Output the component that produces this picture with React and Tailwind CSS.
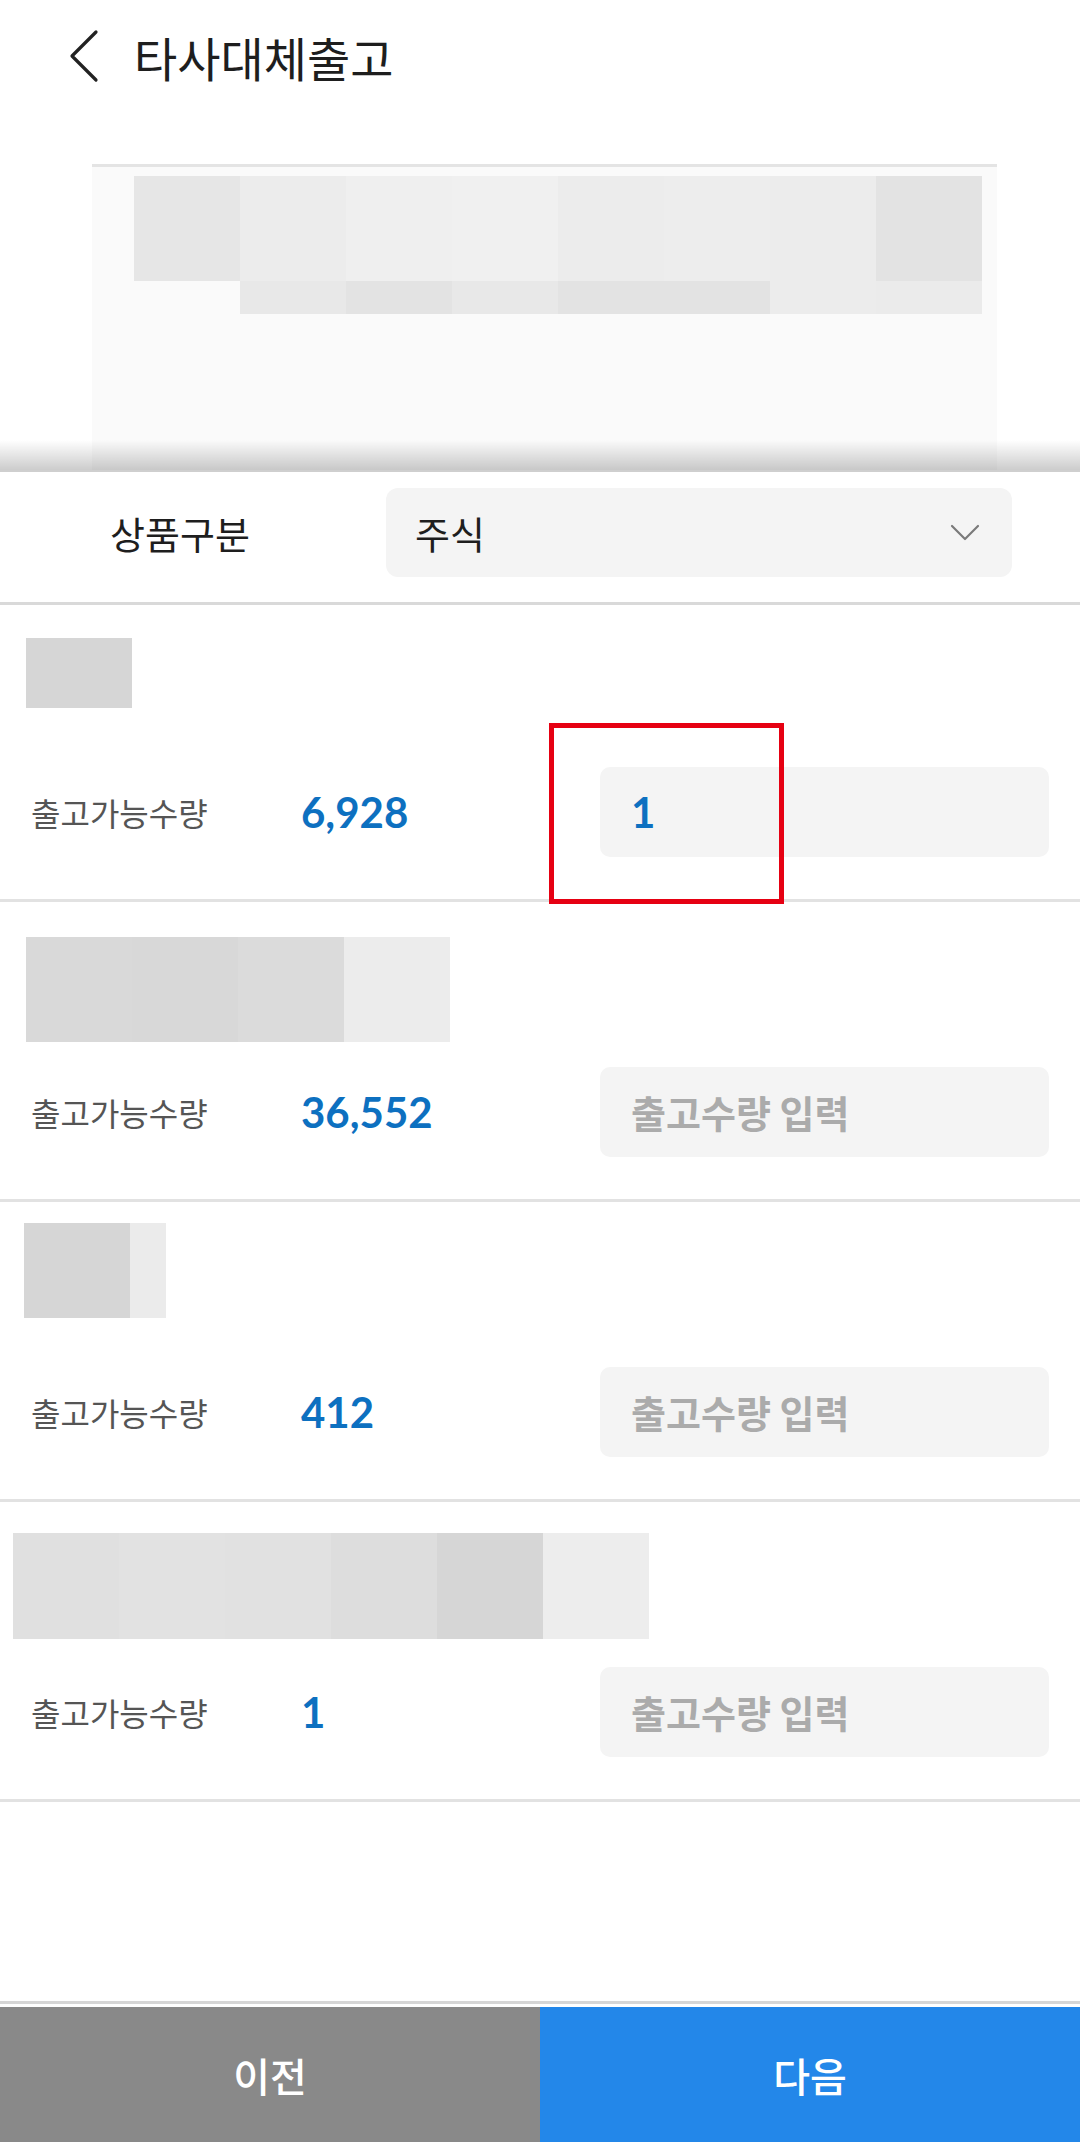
import React, { useState } from "react";

const kr = "font-['Noto_Sans_CJK_KR','Noto_Sans',sans-serif]";
const num = "font-['Lato','Noto_Sans_CJK_KR',sans-serif]";

// blurred name blocks (pixelated in the capture)
const previewTop = ["#e6e6e6", "#ececec", "#efefef", "#f0f0f0", "#ececec", "#ededed", "#ececec", "#e3e3e3"];
const previewBottom = ["#e8e8e8", "#e3e3e3", "#e8e8e8", "#e3e3e3", "#e3e3e3", "#ececec", "#ebebeb"];

const items = [
  { id: 1, avail: "6,928", value: "1", box: "h-[297px]", top: "h-[162px] pt-[33px]", ml: "ml-[26px]", h: "h-[70px]", tiles: ["#d6d6d6"] },
  { id: 2, avail: "36,552", value: "", box: "h-[300px]", top: "h-[165px] pt-[35px]", ml: "ml-[26px]", h: "h-[105px]", tiles: ["#d9d9d9", "#d8d8d8", "#dbdbdb", "#ececec"] },
  { id: 3, avail: "412", value: "", box: "h-[300px]", top: "h-[165px] pt-[21px]", ml: "ml-[24px]", h: "h-[95px]", tiles: ["#d6d6d6", "#ebebeb"], last: "w-[36px]" },
  { id: 4, avail: "1", value: "", box: "h-[300px]", top: "h-[165px] pt-[31px]", ml: "ml-[13px]", h: "h-[106px]", tiles: ["#e0e0e0", "#e2e2e2", "#e1e1e1", "#dddddd", "#d6d6d6", "#ededed"] },
];

const BackIcon = () => (
  <svg width="32" height="54" viewBox="0 0 32 54" fill="none">
    <path d="M28 3L4 27L28 51" stroke="#222" strokeWidth="3.2" strokeLinecap="round" strokeLinejoin="round" />
  </svg>
);

const ChevronDown = () => (
  <svg width="30" height="18" viewBox="0 0 30 18" fill="none">
    <path d="M2 2L15 15L28 2" stroke="#7a7a7a" strokeWidth="2.2" strokeLinecap="round" strokeLinejoin="round" />
  </svg>
);

const ItemRow = ({ item, highlight }) => {
  const [qty, setQty] = useState(item.value);
  return (
    <div className={`relative flex flex-col border-b-[3px] border-[#e2e2e2] ${item.box}`}>
      <div className={item.top}>
        <div className={`flex ${item.ml} ${item.h}`}>
          {item.tiles.map((c, i) => (
            <div
              key={i}
              className={`h-full ${i === item.tiles.length - 1 && item.last ? item.last : "w-[106px]"}`}
              style={{ backgroundColor: c }}
            />
          ))}
        </div>
      </div>
      <div className="flex h-[90px] items-center pl-[31px] pr-[31px]">
        <div className={`w-[270px] text-[32px] leading-none text-[#555] ${kr}`}>출고가능수량</div>
        <div className={`flex-1 text-[42px] font-bold leading-none text-[#0d70c0] ${num}`}>{item.avail}</div>
        <div className="flex h-[90px] w-[449px] items-center rounded-[10px] bg-[#f4f4f4] px-[31px]">
          <input
            value={qty}
            onChange={(e) => setQty(e.target.value)}
            placeholder="출고수량 입력"
            className={`w-full bg-transparent text-[42px] font-bold text-[#0d70c0] outline-none placeholder:text-[38px] placeholder:font-semibold placeholder:text-[#ababab] placeholder:font-['Noto_Sans_CJK_KR',sans-serif] ${num}`}
          />
        </div>
      </div>
      {highlight && (
        <div className="absolute left-[549px] top-[118px] h-[181px] w-[235px] border-[5px] border-[#e60012]" />
      )}
    </div>
  );
};

const App = () => {
  return (
    <div className={`w-[1080px] min-h-[2142px] bg-white ${kr}`}>
      {/* Header */}
      <div className="flex h-[112px] items-center pl-[68px]">
        <BackIcon />
        <h1 className="ml-[34px] text-[47px] font-normal leading-none text-[#1e1e1e]">타사대체출고</h1>
      </div>

      {/* Preview (blurred) */}
      <div className="relative h-[358px] overflow-hidden pt-[52px]">
        <div className="ml-[92px] h-[400px] w-[905px] border-t-[3px] border-[#e4e4e4] bg-[#fafafa] pt-[9px]">
          <div className="ml-[42px] flex h-[105px]">
            {previewTop.map((c, i) => (
              <div key={i} className="h-full w-[106px]" style={{ backgroundColor: c }} />
            ))}
          </div>
          <div className="ml-[148px] flex h-[33px]">
            {previewBottom.map((c, i) => (
              <div key={i} className="h-full w-[106px]" style={{ backgroundColor: c }} />
            ))}
          </div>
        </div>
        <div className="absolute bottom-0 left-0 h-[30px] w-full bg-gradient-to-b from-[rgba(0,0,0,0)] to-[rgba(0,0,0,0.2)]" />
      </div>
      <div className="h-[2px] bg-[#cfcfcf]" />

      {/* Category select */}
      <div className="flex h-[133px] items-start border-b-[3px] border-[#d9d9d9] pt-[16px]">
        <div className="flex h-[89px] w-[386px] items-center pl-[110px] text-[38px] leading-none text-[#1e1e1e]">
          상품구분
        </div>
        <button className="flex h-[89px] w-[626px] items-center justify-between rounded-[12px] bg-[#f4f4f4] pl-[29px] pr-[32px]">
          <span className="text-[38px] leading-none text-[#1e1e1e]">주식</span>
          <ChevronDown />
        </button>
      </div>

      {/* Items */}
      {items.map((item) => (
        <ItemRow key={item.id} item={item} highlight={item.id === 1} />
      ))}

      <div className="h-[199px]" />

      {/* Footer buttons */}
      <div className="border-t-[3px] border-[#d6d6d6] pt-[3px]">
        <div className="flex h-[135px]">
          <button className="flex flex-1 items-center justify-center bg-[#898989] text-[40px] font-medium text-white">
            이전
          </button>
          <button className="flex flex-1 items-center justify-center bg-[#2387e9] text-[40px] font-medium text-white">
            다음
          </button>
        </div>
      </div>
    </div>
  );
};

export default App;
